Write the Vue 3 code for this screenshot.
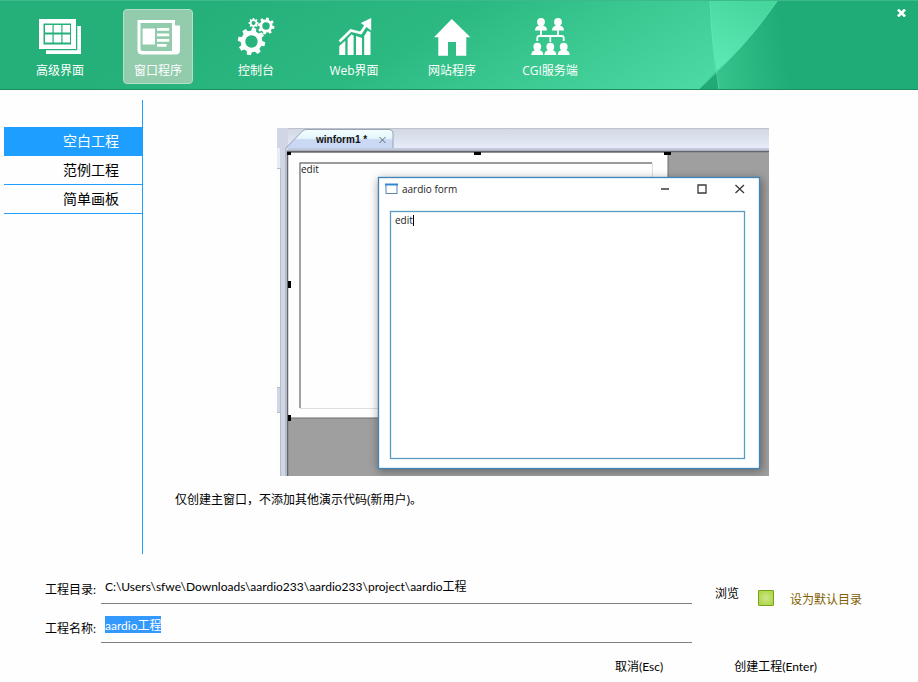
<script setup>
import { onMounted, ref } from 'vue'

const categories = ['高级界面', '窗口程序', '控制台', 'Web界面', '网站程序', 'CGI服务端']
const templates = ['空白工程', '范例工程', '简单画板']
const category = ref(1)
const template = ref(0)
const folder = ref('C:\\Users\\sfwe\\Downloads\\aardio233\\aardio233\\project\\aardio工程')
const name = ref('aardio工程')
const isDefault = ref(true)
const nameInput = ref(null)

// Outline of a cog wheel with a round hole in the middle.
function gear(cx, cy, outer, inner, hole, teeth, turn) {
  const step = (Math.PI * 2) / teeth
  const pts = []
  for (let i = 0; i < teeth; i++) {
    const a = i * step + turn
    for (const [r, k] of [[inner, -0.3], [outer, -0.19], [outer, 0.19], [inner, 0.3]]) {
      pts.push(`${(cx + r * Math.cos(a + k * step)).toFixed(2)} ${(cy + r * Math.sin(a + k * step)).toFixed(2)}`)
    }
  }
  return `M${pts.join('L')}ZM${cx - hole} ${cy}a${hole} ${hole} 0 1 0 ${hole * 2} 0a${hole} ${hole} 0 1 0 ${-hole * 2} 0Z`
}
const gears =
  gear(17.5, 23.5, 13.8, 10.8, 6.2, 8, 0.2) + gear(32, 8, 8.6, 6.6, 3.7, 8, 0.2) + gear(19.5, 5, 5, 3.8, 2, 8, 0)

const people = [[13, 0], [30, 0], [9.3, 24.7], [22.3, 24.7], [35.7, 24.7]]

onMounted(() => {
  nameInput.value.focus()
  nameInput.value.select()
})
</script>

<template>
  <div class="wizard">
    <header class="banner">
      <svg class="backdrop" viewBox="0 0 918 90" preserveAspectRatio="none" aria-hidden="true">
        <defs>
          <linearGradient id="base" gradientUnits="userSpaceOnUse" x1="330" y1="-60" x2="560" y2="340">
            <stop offset="0" stop-color="#25b079" />
            <stop offset="0.28" stop-color="#2cb981" />
            <stop offset="0.7" stop-color="#4edca6" />
          </linearGradient>
          <linearGradient id="beam" gradientUnits="userSpaceOnUse" x1="750" y1="0" x2="715" y2="70">
            <stop offset="0" stop-color="#46d79d" />
            <stop offset="1" stop-color="#5eeab5" />
          </linearGradient>
          <linearGradient id="shade" gradientUnits="userSpaceOnUse" x1="715" y1="60" x2="785" y2="50">
            <stop offset="0" stop-color="#36c48c" />
            <stop offset="0.5" stop-color="#2ab780" />
            <stop offset="1" stop-color="#1fac76" />
          </linearGradient>
        </defs>
        <rect width="918" height="90" fill="url(#base)" />
        <path d="M710 0Q711 40 717 71Q750 41 778 0Z" fill="url(#beam)" />
        <path d="M778 0Q750 41 717 71L719 90H918V0Z" fill="url(#shade)" />
        <path d="M717 71L698 90H719Z" fill="#21aa75" />
        <path d="M710 0Q711 40 719 90M778 0Q748 45 698 90" fill="none" stroke="#6ff0c0" stroke-opacity=".45" />
        <path d="M0 .5H918" stroke="#3dba8a" />
        <path d="M0 89.5H918" stroke="#1b8f62" />
      </svg>

      <nav class="categories">
        <button
          v-for="(label, i) in categories"
          :key="label"
          type="button"
          class="category"
          :class="{ active: category === i }"
          @click="category = i"
        >
          <svg class="icon" viewBox="0 0 44 38" fill="#fff" aria-hidden="true">
            <template v-if="i === 0">
              <path fill-rule="evenodd" d="M1 1H38V31H1ZM5.5 5.5V26.5H33V5.5Z" />
              <path d="M7 7h7.5v7.5H7zM15.7 7h7.6v7.5h-7.6zM24.5 7H32v7.5h-7.5zM7 16.5h7.5v8H7zM15.7 16.5h7.6v8h-7.6zM24.5 16.5H32v8h-7.5z" />
              <path d="M39.3 8H43V36H8V32.3H39.3Z" />
            </template>
            <template v-else-if="i === 1">
              <path fill-rule="evenodd" d="M1.5 2H39V7.5H44V32Q44 36.5 39.5 36.5H6Q1.5 36.5 1.5 32ZM4.5 5V31Q4.5 33 6.5 33H36V5Z" />
              <path d="M6.6 10.5H19V26.5H6.6ZM21 10H33.2V12.7H21ZM21 15.5H33.2V18.2H21ZM21 21H33.2V23.7H21ZM21 26H30.6V28.7H21Z" />
            </template>
            <path v-else-if="i === 2" fill-rule="evenodd" :d="gears" />
            <template v-else-if="i === 3">
              <path d="M7.3 28L13.3 22.7V37H7.3ZM15.6 20.5L19.3 16.6L21.6 17.5V37H15.6ZM24 18L30 20V37H24ZM32.2 18L35.5 12.8L38.5 14V37H32.2Z" />
              <path d="M7.5 23.5L18.8 12.5L28.8 15L35 5.5" fill="none" stroke="#fff" stroke-width="2.6" />
              <path d="M28.8 5L39.2 0V12.5Z" />
            </template>
            <path v-else-if="i === 4" d="M21.8 1L40.4 19.2H36.3V37.7H26V24H18V37.7H8.3V19.2H4Z" />
            <template v-else>
              <g v-for="[x, y] in people" :key="x" :transform="`translate(${x} ${y})`">
                <circle cy="4" r="3.9" />
                <path d="M-2 6H2V7.4Q6 8.4 6 12.4H-6Q-6 8.4 -2 7.4Z" />
              </g>
              <path d="M13 12V18M30 12V18M9.3 23V20Q9.3 18 11.3 18H33.7Q35.7 18 35.7 20V23M22.3 18V24" fill="none" stroke="#fff" stroke-width="1.8" />
            </template>
          </svg>
          <span>{{ label }}</span>
        </button>
      </nav>

      <button type="button" class="close" aria-label="关闭">
        <svg viewBox="0 0 9 8" width="9" height="8" aria-hidden="true">
          <path d="M1 .5L8 7.5M8 .5L1 7.5" stroke="#fff" stroke-width="2.6" />
        </svg>
      </button>
    </header>

    <main class="body">
      <nav class="templates">
        <button
          v-for="(label, i) in templates"
          :key="label"
          type="button"
          class="template"
          :class="{ active: template === i }"
          @click="template = i"
        >{{ label }}</button>
      </nav>

      <section class="detail">
        <svg class="preview" viewBox="0 0 492 348" role="img">
          <defs>
            <linearGradient id="strip" x2="0" y2="1">
              <stop offset="0" stop-color="#d0d6e2" />
              <stop offset="1" stop-color="#e8eef9" />
            </linearGradient>
            <linearGradient id="tab" x2="0" y2="1">
              <stop offset="0" stop-color="#f4ffff" />
              <stop offset=".48" stop-color="#e4f6fb" />
              <stop offset=".55" stop-color="#ccd9f4" />
              <stop offset="1" stop-color="#c8d7f5" />
            </linearGradient>
            <filter id="blur" x="-10%" y="-10%" width="120%" height="120%">
              <feGaussianBlur stdDeviation="5" />
            </filter>
            <clipPath id="frame"><rect width="492" height="348" /></clipPath>
          </defs>
          <g clip-path="url(#frame)">
            <rect width="492" height="348" fill="#9f9f9f" />
            <rect width="492" height="21" fill="url(#strip)" />
            <path d="M0 .5H492" stroke="#bcc1cb" />
            <path d="M8 21.5H492" stroke="#c3cadc" stroke-width="3" />
            <rect width="11" height="348" fill="#d0d6e4" />
            <rect y="20" width="3" height="20" fill="#e8edf4" />
            <rect y="40" width="3" height="219" fill="#fdfdfd" />
            <rect y="284" width="3" height="64" fill="#fdfdfd" />
            <path d="M0 40.5H3M0 259.5H3M0 284.5H3M3.5 40V348M8.5 20V348" stroke="#b5bdcb" />
            <path d="M9 20L25 3.5Q27 1.5 30 1.5H112Q116 1.5 116 5V20" fill="url(#tab)" stroke="#9ba4b4" />
            <text x="39" y="15" class="tab-title">winform1 *</text>
            <path d="M102.5 9L108.5 15M108.5 9L102.5 15" stroke="#666d75" />
            <rect x="11" y="25" width="380" height="265" fill="#fefefe" />
            <path d="M10.5 348V23.5H492" fill="none" stroke="#66666e" stroke-width="1.5" />
            <path d="M391 25V290H11" fill="none" stroke="#6d6d6d" />
            <path d="M375.5 35V280.5H23" fill="none" stroke="#dedede" />
            <path d="M23 280V35H375" fill="none" stroke="#7b7b7b" stroke-width="1.4" />
            <text x="24" y="45" class="ui-text">edit</text>
            <path d="M10 24h4v3h-4zM197 24h7v3h-7zM387 24h7v3h-7zM11 153h3v7h-3zM11 287h3v6h-3z" fill="#000" />
            <rect x="101" y="51" width="384" height="292" fill="#000" opacity=".38" filter="url(#blur)" />
            <rect x="101.5" y="49.5" width="381" height="291" fill="#fff" stroke="#3d86bd" stroke-width="1.3" />
            <rect x="113.5" y="83.5" width="354" height="247" fill="#fff" stroke="#579dc2" stroke-width="1.3" />
            <rect x="109" y="56.5" width="11" height="9" fill="#fff" stroke="#5b86ac" />
            <path d="M108 56.5H121" stroke="#3287cf" stroke-width="2" />
            <text x="125" y="65" class="ui-text">aardio form</text>
            <text x="118" y="96" class="ui-text">edit</text>
            <path d="M136.5 87V98" stroke="#000" />
            <path d="M384 61H392M421 57H429V65H421ZM458.5 57L467 65M467 57L458.5 65" fill="none" stroke="#3a3a3a" stroke-width="1.3" />
          </g>
        </svg>
        <p class="description">仅创建主窗口，不添加其他演示代码(新用户)。</p>
      </section>
    </main>

    <form class="settings" @submit.prevent>
      <div class="fields">
        <label for="folder">工程目录:</label>
        <input id="folder" v-model="folder" class="line-input" type="text" spellcheck="false" />
        <div class="side">
          <button type="button" class="browse">浏览</button>
          <input id="default-folder" v-model="isDefault" class="check" type="checkbox" />
          <label for="default-folder" class="check-label">设为默认目录</label>
        </div>
        <label for="name">工程名称:</label>
        <input id="name" ref="nameInput" v-model="name" class="line-input" type="text" spellcheck="false" />
      </div>
      <div class="actions">
        <button type="button">取消(Esc)</button>
        <button type="submit">创建工程(Enter)</button>
      </div>
    </form>
  </div>
</template>

<style>
body {
  background: #fefefe;
}
</style>

<style scoped>
.wizard {
  color: #000;
  font: 12px/20px "Open Sans", "Noto Sans CJK SC", sans-serif;
}
button,
input {
  margin: 0;
  padding: 0;
  border: 0;
  background: none;
  color: inherit;
  font: inherit;
}
button {
  cursor: pointer;
}
.banner {
  position: relative;
  display: flex;
  justify-content: space-between;
  align-items: flex-start;
  padding: 9px 12px 6px 25px;
  background: #25b079;
  color: #fff;
}
.backdrop {
  position: absolute;
  inset: 0;
  width: 100%;
  height: 100%;
}
.categories {
  position: relative;
  display: flex;
  gap: 28px;
}
.category {
  display: flex;
  flex-direction: column;
  align-items: center;
  gap: 5px;
  width: 70px;
  padding: 8px 0 2px;
  border: 1px solid transparent;
  border-radius: 4px;
  white-space: nowrap;
}
.category.active {
  border-color: #b5dfc9;
  background: #93cbad;
}
.icon {
  width: 44px;
  height: 38px;
  overflow: visible;
}
.close {
  position: relative;
  display: flex;
}
.body {
  display: flex;
  padding: 10px 0 0 4px;
}
.templates {
  flex: 0 0 138px;
  padding-top: 27px;
  border-right: 1px solid #1e9fff;
}
.template {
  display: block;
  width: 100%;
  padding: 4px 23px 4px 0;
  border-bottom: 1px solid #1e9fff;
  font-size: 14px;
  text-align: right;
}
.template.active {
  background: #1e9fff;
  color: #fff;
}
.detail {
  flex: 1;
  display: flex;
  flex-direction: column;
  gap: 14px;
  padding: 28px 47px 44px 32px;
}
.preview {
  align-self: center;
  width: 100%;
  max-width: 492px;
}
.tab-title {
  font: bold 10px "Liberation Sans", sans-serif;
  fill: #111;
}
.ui-text {
  font: 10px "Open Sans", sans-serif;
  fill: #222;
}
.description {
  margin: 0;
}
.settings {
  padding: 22px 56px 6px 45px;
  font-family: Lato, "Noto Sans CJK SC", sans-serif;
}
.fields {
  display: grid;
  grid-template-columns: 52px 1fr auto;
  align-items: center;
  gap: 11px 4px;
}
.line-input {
  min-width: 0;
  height: 18px;
  padding: 0 4px 9px;
  border-bottom: 1px solid #808080;
  border-radius: 0;
  outline: none;
  line-height: 16px;
}
.line-input::selection {
  background: #3399ff;
  color: #fff;
}
.side {
  grid-row: 1 / 3;
  grid-column: 3;
  align-self: start;
  display: flex;
  align-items: center;
  padding: 8px 0 0 19px;
}
.browse {
  padding-bottom: 8px;
}
.check {
  appearance: none;
  width: 16px;
  height: 16px;
  margin: 0 16px 0 19px;
  border: 1px solid #74a51c;
  border-radius: 1px;
  background: #fff;
}
.check:checked {
  background: radial-gradient(circle, #cde58c, #a9d33b);
}
.check-label {
  padding-top: 4px;
  color: #806000;
}
.actions {
  display: flex;
  justify-content: flex-end;
  gap: 71px;
  padding: 14px 45px 0 0;
}
</style>
